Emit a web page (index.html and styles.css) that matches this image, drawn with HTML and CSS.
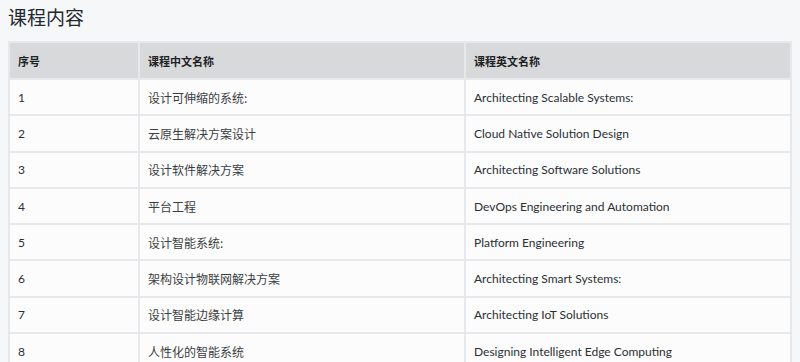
FILE: index.html
```html
<!DOCTYPE html>
<html lang="zh-CN">
  <head>
    <meta charset="utf-8">
    <title>课程内容</title>
    <link rel="stylesheet" href="styles.css">
  </head>
  <body>
    <div class="container">
      <h2 class="title">课程内容</h2>
      <table class="courseTable">
        <thead>
          <tr>
            <th class="colNum">序号</th>
            <th class="colCn">课程中文名称</th>
            <th>课程英文名称</th>
          </tr>
        </thead>
        <tbody>
          <tr><td>1</td><td>设计可伸缩的系统:</td><td>Architecting Scalable Systems:</td></tr>
          <tr><td>2</td><td>云原生解决方案设计</td><td>Cloud Native Solution Design</td></tr>
          <tr><td>3</td><td>设计软件解决方案</td><td>Architecting Software Solutions</td></tr>
          <tr><td>4</td><td>平台工程</td><td>DevOps Engineering and Automation</td></tr>
          <tr><td>5</td><td>设计智能系统:</td><td>Platform Engineering</td></tr>
          <tr><td>6</td><td>架构设计物联网解决方案</td><td>Architecting Smart Systems:</td></tr>
          <tr><td>7</td><td>设计智能边缘计算</td><td>Architecting IoT Solutions</td></tr>
          <tr><td>8</td><td>人性化的智能系统</td><td>Designing Intelligent Edge Computing</td></tr>
        </tbody>
      </table>
    </div>
  </body>
</html>
```

FILE: styles.css
```css
body {
  margin: 0;
  background-color: #f6f7f9;
  font-family: "Lato", "Noto Sans CJK SC", sans-serif;
  color: #2b2f33;
}
.container {
  padding: 4px 8px 0 8px;
}
.title {
  margin: 0 0 11px 0;
  font-family: "Noto Sans CJK SC", sans-serif;
  font-size: 19px;
  font-weight: normal;
  line-height: 26px;
  color: #24282c;
}
.courseTable {
  width: 784px;
  border-collapse: collapse;
  font-size: 12px;
}
.courseTable th,
.courseTable td {
  border: 2px solid #e6e8eb;
  padding: 0 0 0 8px;
  text-align: left;
  height: 34.3px;
}
.courseTable th {
  background-color: #d8d9db;
  font-family: "Noto Sans CJK SC", sans-serif;
  font-size: 11px;
  font-weight: bold;
  height: 35px;
  color: #1f2326;
}
.courseTable td {
  background-color: #fcfcfd;
}
.courseTable td:nth-child(2) {
  font-family: "Noto Sans CJK SC", sans-serif;
  font-size: 12px;
  color: #3a3e42;
}
.colNum {
  width: 120px;
}
.colCn {
  width: 316px;
}
```
